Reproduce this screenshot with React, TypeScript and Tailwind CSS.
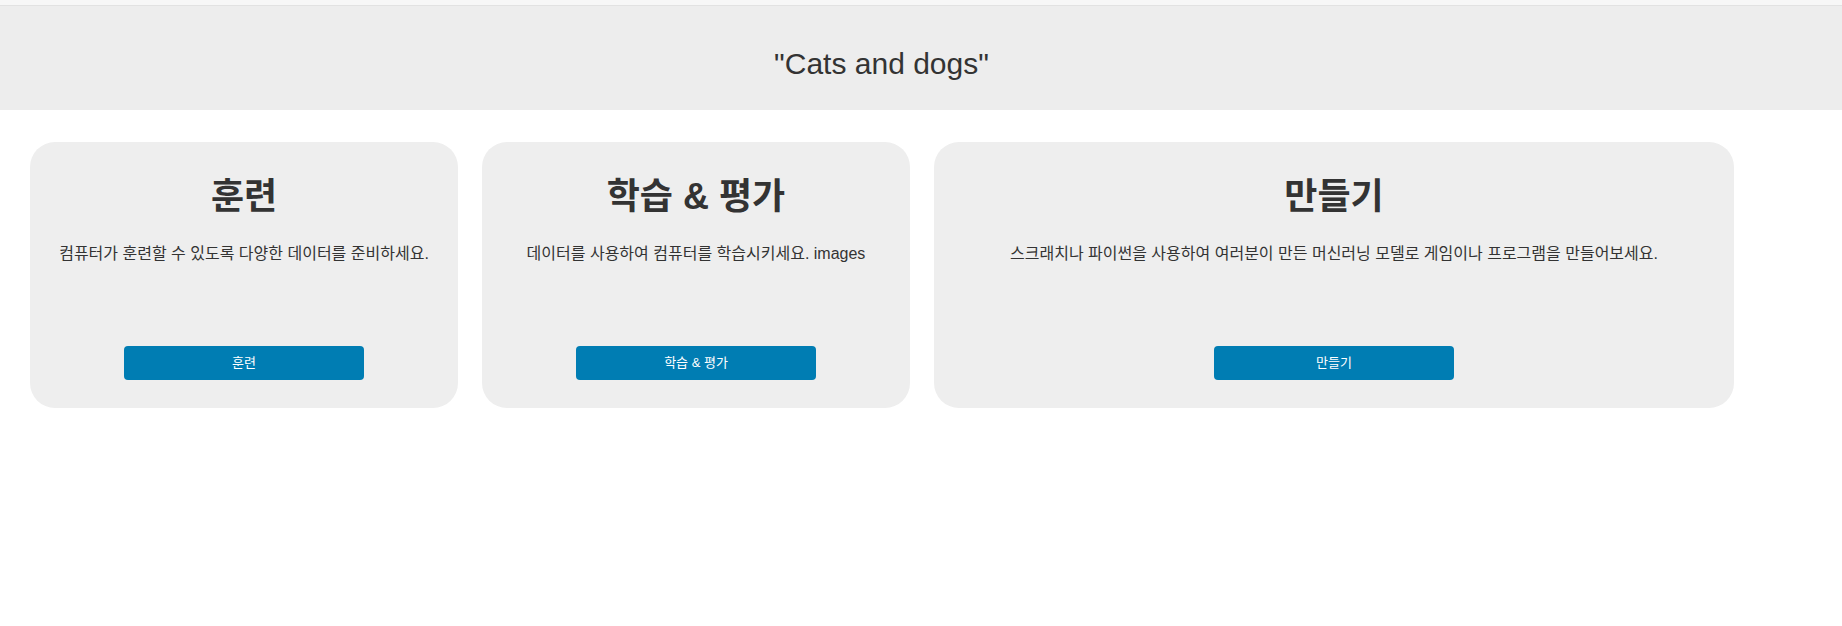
const cards = [
  {
    title: '훈련',
    text: '컴퓨터가 훈련할 수 있도록 다양한 데이터를 준비하세요.',
    button: '훈련',
    width: 'w-[428px]',
  },
  {
    title: '학습 & 평가',
    text: '데이터를 사용하여 컴퓨터를 학습시키세요. images',
    button: '학습 & 평가',
    width: 'w-[428px]',
  },
  {
    title: '만들기',
    text: '스크래치나 파이썬을 사용하여 여러분이 만든 머신러닝 모델로 게임이나 프로그램을 만들어보세요.',
    button: '만들기',
    width: 'w-[800px]',
  },
];

const App = () => {
  return (
    <div className="min-h-screen bg-white text-[#333333] font-['Liberation_Sans','Noto_Sans_CJK_KR',sans-serif]">
      {/* top strip */}
      <div className="h-[6px] bg-[#f7f7f7] border-b border-[#e2e2e2]" />

      {/* project name */}
      <div className="h-[104px] bg-[#ededed] flex justify-center pt-[41px] pr-[79px]">
        <h1 className="text-[30px] leading-[34px] font-normal">"Cats and dogs"</h1>
      </div>

      {/* cards */}
      <div className="flex gap-6 pl-[30px] pt-[32px]">
        {cards.map((card) => (
          <div
            key={card.title}
            className={`${card.width} h-[266px] rounded-[25px] bg-[#eeeeee] flex flex-col items-center pt-[33px] pb-[28px]`}
          >
            <h2 className="text-[36px] leading-[44px] font-bold">{card.title}</h2>
            <p className="mt-[23px] text-[16px] leading-[24px]">{card.text}</p>
            <button className="mt-auto w-[240px] h-[34px] rounded-[4px] bg-[#007db3] text-white text-[13px]">
              {card.button}
            </button>
          </div>
        ))}
      </div>
    </div>
  );
};

export default App;
